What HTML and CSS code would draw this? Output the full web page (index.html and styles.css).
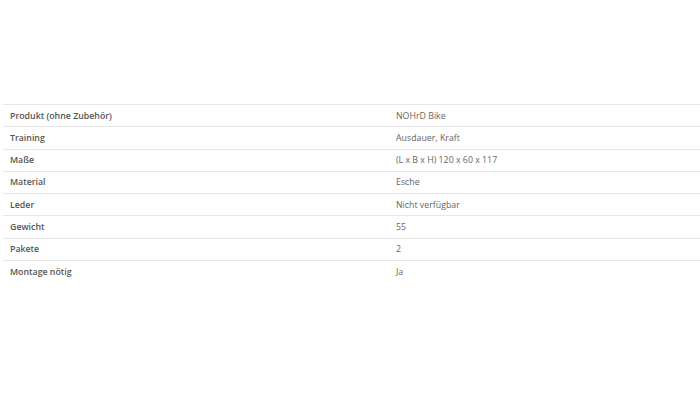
FILE: index.html
```html
<!DOCTYPE html>
<html lang="de">
<head>
<meta charset="utf-8">
<title>Produktdetails</title>
<link rel="stylesheet" href="styles.css">
</head>
<body>
<main class="page">
  <table class="specs">
    <tbody>
      <tr><th>Produkt (ohne Zubehör)</th><td>NOHrD Bike</td></tr>
      <tr><th>Training</th><td>Ausdauer, Kraft</td></tr>
      <tr><th>Maße</th><td>(L x B x H) 120 x 60 x 117</td></tr>
      <tr><th>Material</th><td>Esche</td></tr>
      <tr><th>Leder</th><td>Nicht verfügbar</td></tr>
      <tr><th>Gewicht</th><td>55</td></tr>
      <tr><th>Pakete</th><td>2</td></tr>
      <tr class="last"><th>Montage nötig</th><td>Ja</td></tr>
    </tbody>
  </table>
</main>
</body>
</html>
```
FILE: styles.css
```css
html, body {
  margin: 0;
  padding: 0;
  background: #ffffff;
}
body {
  font-family: "Open Sans", "Liberation Sans", sans-serif;
  font-size: 8.8px;
  color: #666666;
}
.page {
  padding: 104px 0 0 3px;
}
.specs {
  width: 697px;
  border-collapse: collapse;
}
.specs th,
.specs td {
  text-align: left;
  vertical-align: middle;
  padding: 5.5px 7px 5.5px 7px;
  line-height: 10.3px;
  border-top: 1px solid #e6e6e6;
}
.specs th {
  width: 372px;
  font-weight: 600;
  color: #555555;
}
.specs td {
  font-weight: 400;
  color: #666666;
}
```
